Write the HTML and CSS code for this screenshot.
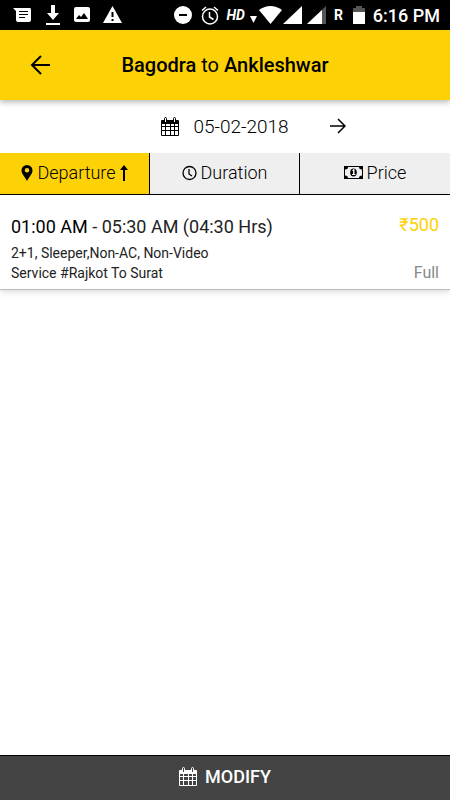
FILE: index.html
```html
<!DOCTYPE html>
<html lang="en">
<head>
    <meta charset="UTF-8">
    <meta name="viewport" content="width=device-width, initial-scale=1.0">
    <title>Bagodra to Ankleshwar</title>
    <link rel="stylesheet" href="styles.css">
</head>
<body>
    <!-- Shared calendar icon -->
    <svg class="sprite" aria-hidden="true">
        <symbol id="calendar" viewBox="0 0 18 19">
            <path fill="currentColor" fill-rule="evenodd" d="M1 3h2v2h3V3h6v2h3V3h2a1 1 0 0 1 1 1v14a1 1 0 0 1-1 1H1a1 1 0 0 1-1-1V4a1 1 0 0 1 1-1zM1 7v2h3V7zM5 7v2h4V7zM10 7v2h3V7zM14 7v2h3V7zM1 10v3h3v-3zM5 10v3h4v-3zM10 10v3h3v-3zM14 10v3h3v-3zM1 14v4h3v-4zM5 14v4h4v-4zM10 14v4h3v-4zM14 14v4h3v-4z"/>
            <path fill="none" stroke="currentColor" d="M3.5 5V1.5a1 1 0 0 1 2 0V5M12.5 5V1.5a1 1 0 0 1 2 0V5"/>
        </symbol>
    </svg>

    <!-- Status Bar -->
    <div class="status-bar">
        <div class="status-left">
            <svg width="19" height="18" viewBox="0 0 19 18"><path fill="#fff" fill-rule="evenodd" d="M0 2h17q1 0 1 2v10q0 2-2 2H5q-2 0-2-2V5zM6 5v1h9V5zM6 8v1h9V8zM6 11v1h6v-1z"/></svg>
            <svg width="16" height="20" viewBox="0 0 16 20"><path fill="#fff" d="M6 0h4v8h4l-6 7-6-7h4zM1 18h14v2H1z"/></svg>
            <svg width="16" height="18" viewBox="0 0 16 18"><path fill="#fff" fill-rule="evenodd" d="M2 1h12q2 0 2 2v11q0 2-2 2H2q-2 0-2-2V3q0-2 2-2zM2 13h12l-4-6-3 4-2-2z"/></svg>
            <svg width="20" height="18" viewBox="0 0 20 18"><path fill="#fff" fill-rule="evenodd" d="M9.500 0L19 17H0zM8.500 6v5h2V6zM8.500 13v2h2v-2z"/></svg>
        </div>
        <div class="status-right">
            <svg width="18" height="18" viewBox="0 0 18 18"><circle cx="9" cy="9" r="9" fill="#fff"/><path d="M5 8h8v2H5z"/></svg>
            <svg class="alarm" width="18" height="19" viewBox="0 0 18 19"><g fill="none" stroke="#fff" stroke-width="1.500"><circle cx="9" cy="10.500" r="7.500"/><path d="M8.500 6v5l4 2.500M1 4.500l4-3.500M17 4.500L13 1"/></g></svg>
            <span class="hd">HD</span>
            <svg class="small-arrow" width="7" height="7" viewBox="0 0 7 7"><path fill="#fff" d="M0 0h7L3.500 7z"/></svg>
            <svg class="wifi" width="23" height="18" viewBox="0 0 23 18"><path fill="#fff" d="M0 4Q11.500-4 23 4L11.500 18z"/></svg>
            <svg class="signal" width="19" height="18" viewBox="0 0 19 18"><path fill="#fff" d="M19 0v18H0z"/></svg>
            <svg class="signal-low" width="19" height="18" viewBox="0 0 19 18"><path fill="#555" d="M19 0v18H0z"/><path fill="#fff" d="M15 4v14H0z"/></svg>
            <span class="roaming">R</span>
            <svg class="battery" width="12" height="18" viewBox="0 0 12 18"><path fill="#555" d="M3 0h6v2h3v5H0V2h3z"/><path fill="#fff" d="M0 6h12v12H0z"/></svg>
            <span class="time">6:16 PM</span>
        </div>
    </div>

    <!-- Page Header -->
    <header class="header">
        <button type="button" class="icon-btn back" aria-label="Back">
            <svg width="20" height="20" viewBox="0 0 20 20"><path fill="none" stroke="#000" stroke-width="2" d="M20 10H2M11 1L2 10l9 9"/></svg>
        </button>
        <h1>Bagodra <span>to</span> Ankleshwar</h1>
    </header>

    <!-- Journey Date -->
    <div class="date-bar">
        <button type="button" class="date">
            <svg width="18" height="19"><use href="#calendar"/></svg>
            05-02-2018
        </button>
        <button type="button" class="icon-btn next" aria-label="Next day">
            <svg width="16" height="16" viewBox="0 0 16 16"><path fill="none" stroke="#000" stroke-width="1.500" d="M0 8h14M8 1l7 7-7 7"/></svg>
        </button>
    </div>

    <!-- Sort Tabs -->
    <div class="tabs">
        <button type="button" class="tab active">
            <svg width="12" height="16" viewBox="0 0 12 16"><path fill-rule="evenodd" d="M6 0a5.500 5.500 0 0 1 5.500 5.500C11.500 9 8 12 6 16 4 12 .5 9 .5 5.500A5.500 5.500 0 0 1 6 0zm0 3a2.300 2.300 0 1 0 0 4.600A2.300 2.300 0 0 0 6 3z"/></svg>
            Departure
            <svg width="8" height="16" viewBox="0 0 8 16"><path d="M4 0l4 5H5v11H3V5H0z"/></svg>
        </button>
        <button type="button" class="tab">
            <svg width="15" height="16" viewBox="0 0 15 16"><g fill="none" stroke="#000" stroke-width="1.300"><circle cx="7.500" cy="8" r="6.500"/><path d="M7 4v5l3 2"/></g></svg>
            Duration
        </button>
        <button type="button" class="tab">
            <svg width="19" height="13" viewBox="0 0 19 13"><path fill-rule="evenodd" d="M0 0h19v13H0zM4 1Q4 3.500 1 3.500v6q3 0 3 2.500h11q0-2.500 3-2.500v-6q-3 0-3-2.500z"/><ellipse cx="9.500" cy="6.500" rx="3.300" ry="4"/><path fill="#efefef" d="M8 4.500L9.500 3h1v5h1v1H8V8h1V5z"/></svg>
            Price
        </button>
    </div>

    <!-- Bus List -->
    <main class="list">
        <article class="bus">
            <div class="bus-info">
                <p class="timing"><span>01:00 AM</span> - 05:30 AM (04:30 Hrs)</p>
                <p>2+1, Sleeper,Non-AC, Non-Video</p>
                <p>Service #Rajkot To Surat</p>
            </div>
            <div class="bus-fare">
                <p class="fare">₹500</p>
                <p class="seats">Full</p>
            </div>
        </article>
    </main>

    <button type="button" class="modify">
        <svg width="18" height="19"><use href="#calendar"/></svg>
        MODIFY
    </button>
</body>
</html>
```
FILE: styles.css
```css
/* General Page Styles */
* {
    box-sizing: border-box;
}

body {
    margin: 0;
    min-height: 100vh;
    display: flex;
    flex-direction: column;
    background-color: #fff;
    color: #000;
    font-family: Roboto, sans-serif;
    font-size: 18px;
}

h1, p {
    margin: 0;
}

button {
    padding: 0;
    border: none;
    background: none;
    color: inherit;
    font: inherit;
    cursor: pointer;
}

svg {
    flex-shrink: 0;
}

.sprite {
    display: none;
}

/* Status Bar */
.status-bar {
    height: 30px;
    padding: 0 10px 0 13px;
    display: flex;
    justify-content: space-between;
    align-items: center;
    background-color: #000;
    color: #fff;
}

.status-left, .status-right {
    display: flex;
    align-items: center;
}

.status-left {
    gap: 13px;
}

.alarm {
    margin-left: 9px;
}

.hd {
    margin-left: 7px;
    font-size: 14px;
    font-weight: 700;
    font-style: italic;
}

.small-arrow {
    margin: 8px 2px 0 5px;
}

.signal {
    margin-left: 1px;
}

.signal-low {
    margin-left: 5px;
}

.roaming {
    margin-left: 8px;
    font-size: 14px;
    font-weight: 700;
}

.battery {
    margin: 0 8px 0 10px;
}

.time {
    font-weight: 500;
}

/* Page Header */
.header {
    height: 70px;
    display: grid;
    grid-template-columns: 1fr auto 1fr;
    align-items: center;
    background-color: #fcd206;
    box-shadow: 0 2px 6px rgba(0, 0, 0, 0.3);
    z-index: 1;
}

.header h1 {
    font-size: 20px;
    font-weight: 500;
}

.header h1 span {
    font-weight: 400;
}

.icon-btn {
    display: flex;
    justify-self: start;
}

.back {
    margin-left: 30px;
}

/* Journey Date */
.date-bar {
    height: 53px;
    padding-bottom: 1px;
    display: grid;
    grid-template-columns: 1fr auto 1fr;
    align-items: center;
}

.date {
    grid-column: 2;
    display: flex;
    align-items: center;
    gap: 14px;
    font-size: 19px;
    font-weight: 300;
}

.next {
    margin-left: 41px;
}

/* Sort Tabs */
.tabs {
    display: grid;
    grid-template-columns: repeat(3, 1fr);
    border-bottom: 1px solid #000;
}

.tab {
    height: 41px;
    padding-bottom: 2px;
    display: flex;
    justify-content: center;
    align-items: center;
    gap: 4px;
    background-color: #efefef;
    border-right: 1px solid #000;
    font-weight: 300;
}

.tab:last-child {
    border-right: none;
}

.tab.active {
    background-color: #fcd206;
}

/* Bus List */
.list {
    flex: 1;
}

.bus {
    padding: 20px 11px 6px;
    display: flex;
    justify-content: space-between;
    border-bottom: 1px solid #bbb;
    box-shadow: 0 2px 6px rgba(0, 0, 0, 0.15);
    color: #222;
    font-size: 14px;
    line-height: 20px;
}

.timing {
    margin-bottom: 4px;
    font-size: 18px;
    line-height: 24px;
}

.timing span {
    color: #000;
}

.bus-fare {
    display: flex;
    flex-direction: column;
    justify-content: space-between;
    text-align: right;
}

.fare {
    color: #fcd206;
    font-size: 18px;
}

.seats {
    color: #888;
    font-size: 16px;
}

/* Modify Button */
.modify {
    height: 45px;
    padding-bottom: 3px;
    display: flex;
    justify-content: center;
    align-items: center;
    gap: 8px;
    background-color: #444;
    border-top: 1px solid #000;
    color: #fff;
    font-weight: 500;
}
```
